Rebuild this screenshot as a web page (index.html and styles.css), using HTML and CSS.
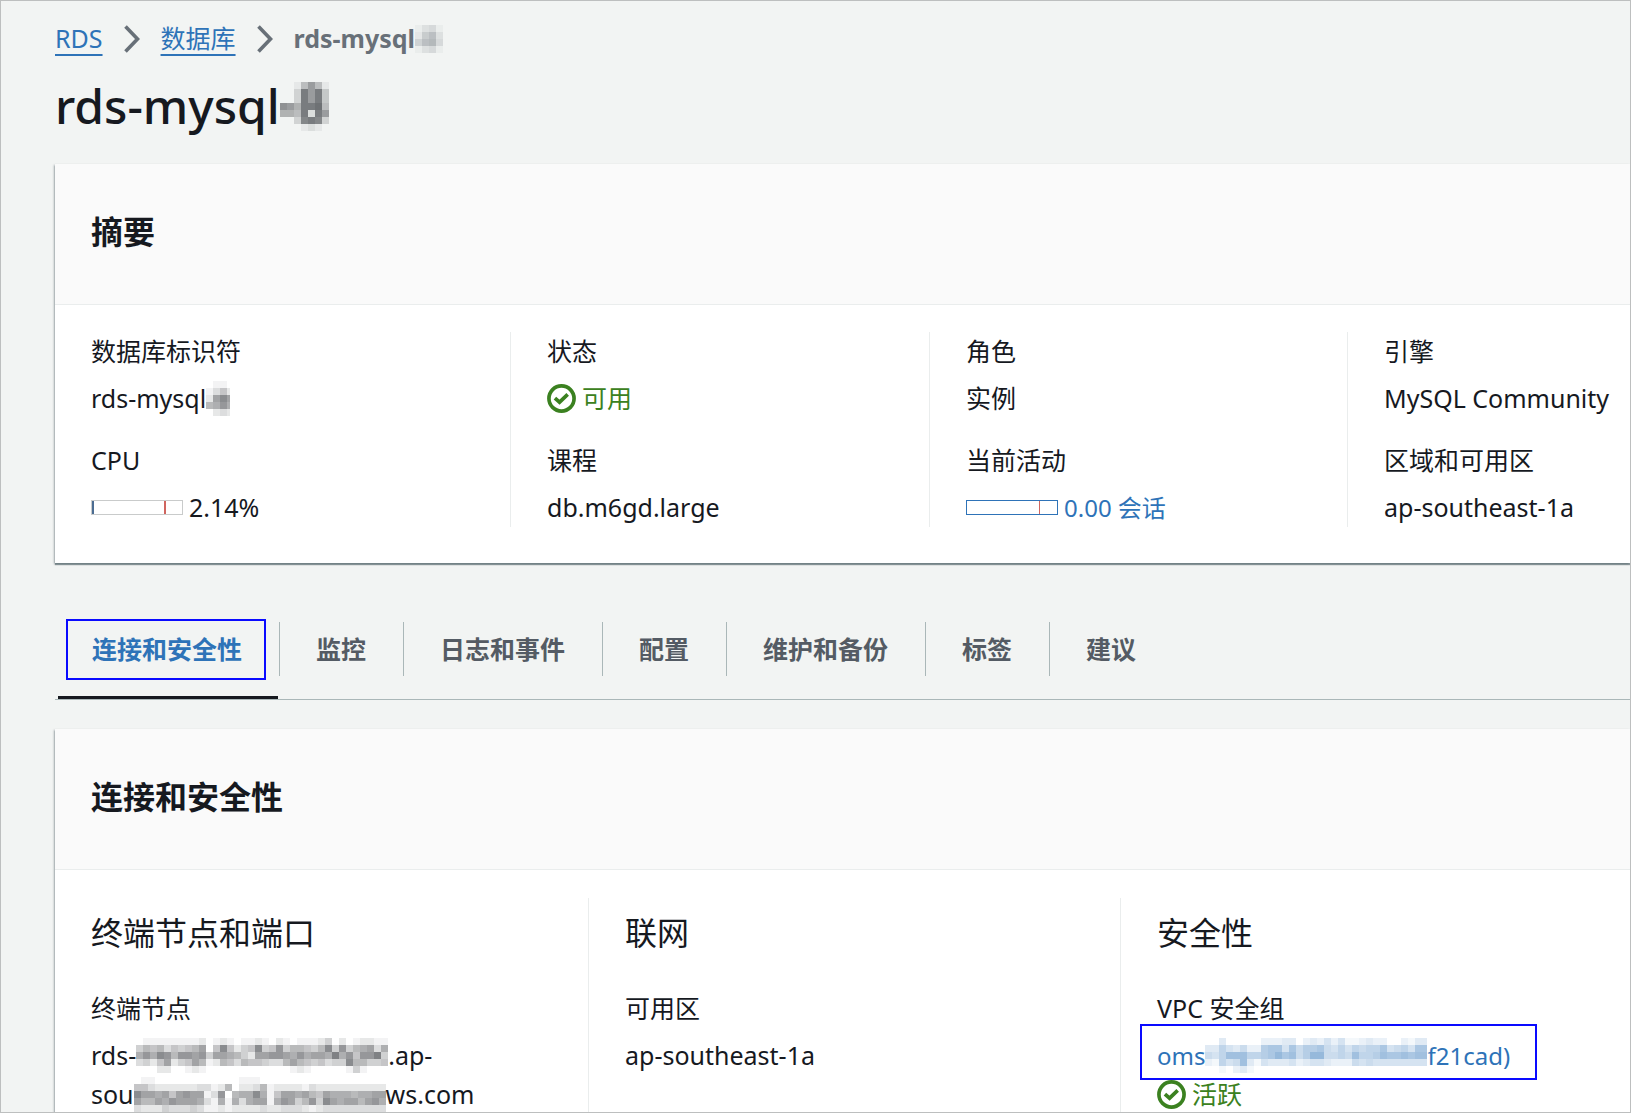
FILE: index.html
```html
<!DOCTYPE html>
<html lang="zh-CN">

<head>
  <meta charset="utf-8">
  <meta name="viewport" content="width=device-width, initial-scale=1">
  <title>rds-mysql</title>
  <link rel="stylesheet" href="styles.css">
</head>

<body>
  <svg class="defs" aria-hidden="true">
    <symbol id="chevron" viewBox="0 0 16 28">
      <path d="M1.5 1.5 L13.5 14 L1.5 26.5" fill="none" stroke="currentColor" stroke-width="3.6" />
    </symbol>
    <symbol id="check" viewBox="0 0 30 30">
      <circle cx="15" cy="15" r="13" fill="none" stroke="currentColor" stroke-width="3.8" />
      <path d="M8.2 14.5 L13 18.8 L21.4 10.8" fill="none" stroke="currentColor" stroke-width="3.8" />
    </symbol>
  </svg>

  <main class="page">
    <nav class="breadcrumb" aria-label="breadcrumb">
      <a href="#rds">RDS</a>
      <svg class="chevron"><use href="#chevron" /></svg>
      <a href="#databases">数据库</a>
      <svg class="chevron"><use href="#chevron" /></svg>
      <span class="current">rds-mysql<svg class="redacted" data-rows="1341 2683 5894 1341"></svg></span>
    </nav>

    <h1 class="title">rds-mysql<svg class="redacted" data-rows="0015851 003b8b4 003b8b4 986bbc5 665b2b8 003aba3 0001210"></svg></h1>

    <section class="card">
      <header class="card-header">
        <h2>摘要</h2>
      </header>
      <div class="columns columns--summary">
        <dl class="column">
          <dt>数据库标识符</dt>
          <dd class="line">rds-mysql<svg class="redacted" data-rows="0110 1352 28a8 6797 0232" data-width="24"></svg></dd>
          <dt>CPU</dt>
          <dd class="line line--icon">
            <svg class="gauge" viewBox="0 0 92 15" role="img" aria-label="CPU">
              <rect class="gauge-frame" x="0.5" y="0.5" width="91" height="14" />
              <rect class="gauge-fill" x="1" y="1" width="2" height="13" />
              <rect class="gauge-limit" x="73" y="1" width="2" height="13" />
            </svg>
            2.14%
          </dd>
        </dl>
        <dl class="column">
          <dt>状态</dt>
          <dd class="line line--icon status"><svg class="check"><use href="#check" /></svg>可用</dd>
          <dt>课程</dt>
          <dd>db.m6gd.large</dd>
        </dl>
        <dl class="column">
          <dt>角色</dt>
          <dd>实例</dd>
          <dt>当前活动</dt>
          <dd>
            <a class="line line--icon" href="#sessions">
              <svg class="gauge gauge--link" viewBox="0 0 92 15" role="img" aria-label="会话">
                <rect class="gauge-frame" x="0.5" y="0.5" width="91" height="14" />
                <rect class="gauge-limit" x="73" y="1" width="1" height="13" />
              </svg>
              0.00 会话
            </a>
          </dd>
        </dl>
        <dl class="column">
          <dt>引擎</dt>
          <dd>MySQL Community</dd>
          <dt>区域和可用区</dt>
          <dd>ap-southeast-1a</dd>
        </dl>
      </div>
    </section>

    <div class="tabs" role="tablist">
      <button class="tab tab--active" role="tab" aria-selected="true">连接和安全性</button>
      <button class="tab" role="tab">监控</button>
      <button class="tab" role="tab">日志和事件</button>
      <button class="tab" role="tab">配置</button>
      <button class="tab" role="tab">维护和备份</button>
      <button class="tab" role="tab">标签</button>
      <button class="tab" role="tab">建议</button>
    </div>

    <section class="card">
      <header class="card-header">
        <h2>连接和安全性</h2>
      </header>
      <div class="columns columns--connect">
        <div class="column">
          <h3>终端节点和端口</h3>
          <dl>
            <dt>终端节点</dt>
            <dd class="line">rds-<svg class="redacted" data-rows="011111111201210112102101112402012211 465635456805a5245a459466546a49467837 797a969989488764288998797887b79599b4b 342582458612653655433686545344a66445 000220012100000000000012100000141000"></svg>.ap-</dd>
            <dd class="line">sou<svg class="redacted" data-rows="011000000000000111000000000000000000 553222222331260223612222132222222222 a8878589881390677a715887865877767788 866879888731717378817984694a87886897 322243334311212222322333212333333333"></svg>ws.com</dd>
          </dl>
        </div>
        <div class="column">
          <h3>联网</h3>
          <dl>
            <dt>可用区</dt>
            <dd>ap-southeast-1a</dd>
          </dl>
        </div>
        <div class="column">
          <h3>安全性</h3>
          <dl>
            <dt>VPC 安全组</dt>
            <dd>
              <a class="line marked" href="#group">oms<svg class="redacted" data-width="222" data-rows="00300000222330232424112322002133 33643522788485778546465668456488 5469996678a8957aa556596679889899 21645931433342344322254544444444 00102310000000000000000000000000"></svg>f21cad)</a>
            </dd>
            <dd class="line line--icon status"><svg class="check"><use href="#check" /></svg>活跃</dd>
          </dl>
        </div>
      </div>
    </section>
  </main>

  <script src="redacted.js"></script>
</body>

</html>
```
FILE: redacted.js
```js
// Each hex digit in data-rows is the strength of one 7px block.
const CELL = 7;
const NS = 'http://www.w3.org/2000/svg';

document.querySelectorAll('.redacted').forEach((svg) => {
  const rows = svg.dataset.rows.split(' ');
  const width = Number(svg.dataset.width) || rows[0].length * CELL;

  svg.setAttribute('width', width);
  svg.setAttribute('height', rows.length * CELL);

  rows.forEach((row, y) => {
    [...row].forEach((digit, x) => {
      const rect = document.createElementNS(NS, 'rect');
      rect.setAttribute('x', x * CELL);
      rect.setAttribute('y', y * CELL);
      rect.setAttribute('width', CELL);
      rect.setAttribute('height', CELL);
      rect.setAttribute('fill-opacity', parseInt(digit, 16) * 0.05);
      svg.appendChild(rect);
    });
  });
});
```
FILE: styles.css
```css
:root {
  --text: #16191f;
  --muted: #545b64;
  --link: #2e73b8;
  --success: #3b8120;
  --line: #eaeded;
  --marker: #0a0aff;
}

* {
  box-sizing: border-box;
}

body,
h1,
h2,
h3,
dl,
dd {
  margin: 0;
}

body {
  background-color: #f2f4f3;
  color: var(--text);
  font-family: "Noto Sans", "Noto Sans CJK SC", sans-serif;
  font-size: 25px;
  line-height: 39px;
}

a {
  color: var(--link);
  text-decoration: none;
}

.defs {
  display: none;
}

.page {
  height: 100vh;
  overflow: hidden;
  padding: 18px 0 0 54px;
  border: 1px solid #bdbfbf;
}

.redacted {
  flex: none;
  fill: currentColor;
  shape-rendering: crispEdges;
}

.breadcrumb {
  display: flex;
  align-items: center;
  gap: 21px;
}

.breadcrumb a {
  text-decoration: underline 2px;
  text-underline-offset: 6px;
  text-decoration-skip-ink: none;
}

.breadcrumb .current {
  display: flex;
  align-items: center;
  color: #687078;
  font-weight: 700;
}

.chevron {
  width: 16px;
  height: 28px;
  color: #687078;
}

.title {
  display: flex;
  align-items: center;
  margin: 18px 0 28px;
  font-size: 48px;
  font-weight: 500;
  line-height: 60px;
}

.card {
  background-color: #fff;
  box-shadow:
    0 2px 1px rgba(0, 28, 36, 0.4),
    -1px 1px 2px rgba(0, 28, 36, 0.3);
}

.card-header {
  padding: 48px 36px 52px;
  border-bottom: 1px solid var(--line);
  background-color: #fafafa;
}

h2,
h3 {
  font-size: 32px;
  line-height: 40px;
}

h3 {
  margin: 15px 0 36px;
  font-weight: 400;
}

.columns {
  display: grid;
  padding: 27px 0 36px;
}

.columns--summary {
  grid-template-columns: 455fr 419fr 418fr 283fr;
}

.columns--connect {
  grid-template-columns: 533fr 532fr 510fr;
  padding-top: 28px;
}

.column {
  min-width: 0;
  padding-left: 36px;
  white-space: nowrap;
}

.column + .column {
  border-left: 1px solid var(--line);
}

dt {
  margin-bottom: 8px;
}

dd + dt {
  margin-top: 23px;
}

.line {
  display: flex;
  align-items: center;
  height: 39px;
}

.line--icon {
  gap: 6px;
}

dd a {
  font-size: 24px;
}

.status {
  color: var(--success);
}

.check {
  width: 29px;
  height: 29px;
}

.gauge {
  width: 92px;
  height: 15px;
}

.gauge-frame {
  fill: #fff;
  stroke: #c9cbcb;
}

.gauge--link .gauge-frame {
  stroke: var(--link);
}

.gauge-fill {
  fill: #4b6c92;
}

.gauge-limit {
  fill: #d0655f;
}

.tabs {
  display: flex;
  margin: 59px 0 29px;
  border-bottom: 1px solid #aab7b8;
}

.tab {
  position: relative;
  margin-bottom: 23px;
  padding: 0 37px 0 36px;
  border: 0;
  background: none;
  color: var(--muted);
  font: inherit;
  font-weight: 700;
  line-height: 54px;
}

.tab + .tab {
  border-left: 1px solid #aab7b8;
}

.tab--active {
  padding-left: 37px;
  color: var(--link);
}

.tab--active::before {
  content: "";
  position: absolute;
  inset: -3px 13px -4px 11px;
  border: 2px solid var(--marker);
}

.tab--active::after {
  content: "";
  position: absolute;
  right: 1px;
  bottom: -23px;
  left: 3px;
  height: 3px;
  background-color: var(--text);
}

.marked {
  position: relative;
  width: max-content;
}

.marked::before {
  content: "";
  position: absolute;
  inset: -12px -27px -5px -17px;
  border: 2px solid var(--marker);
}
```
